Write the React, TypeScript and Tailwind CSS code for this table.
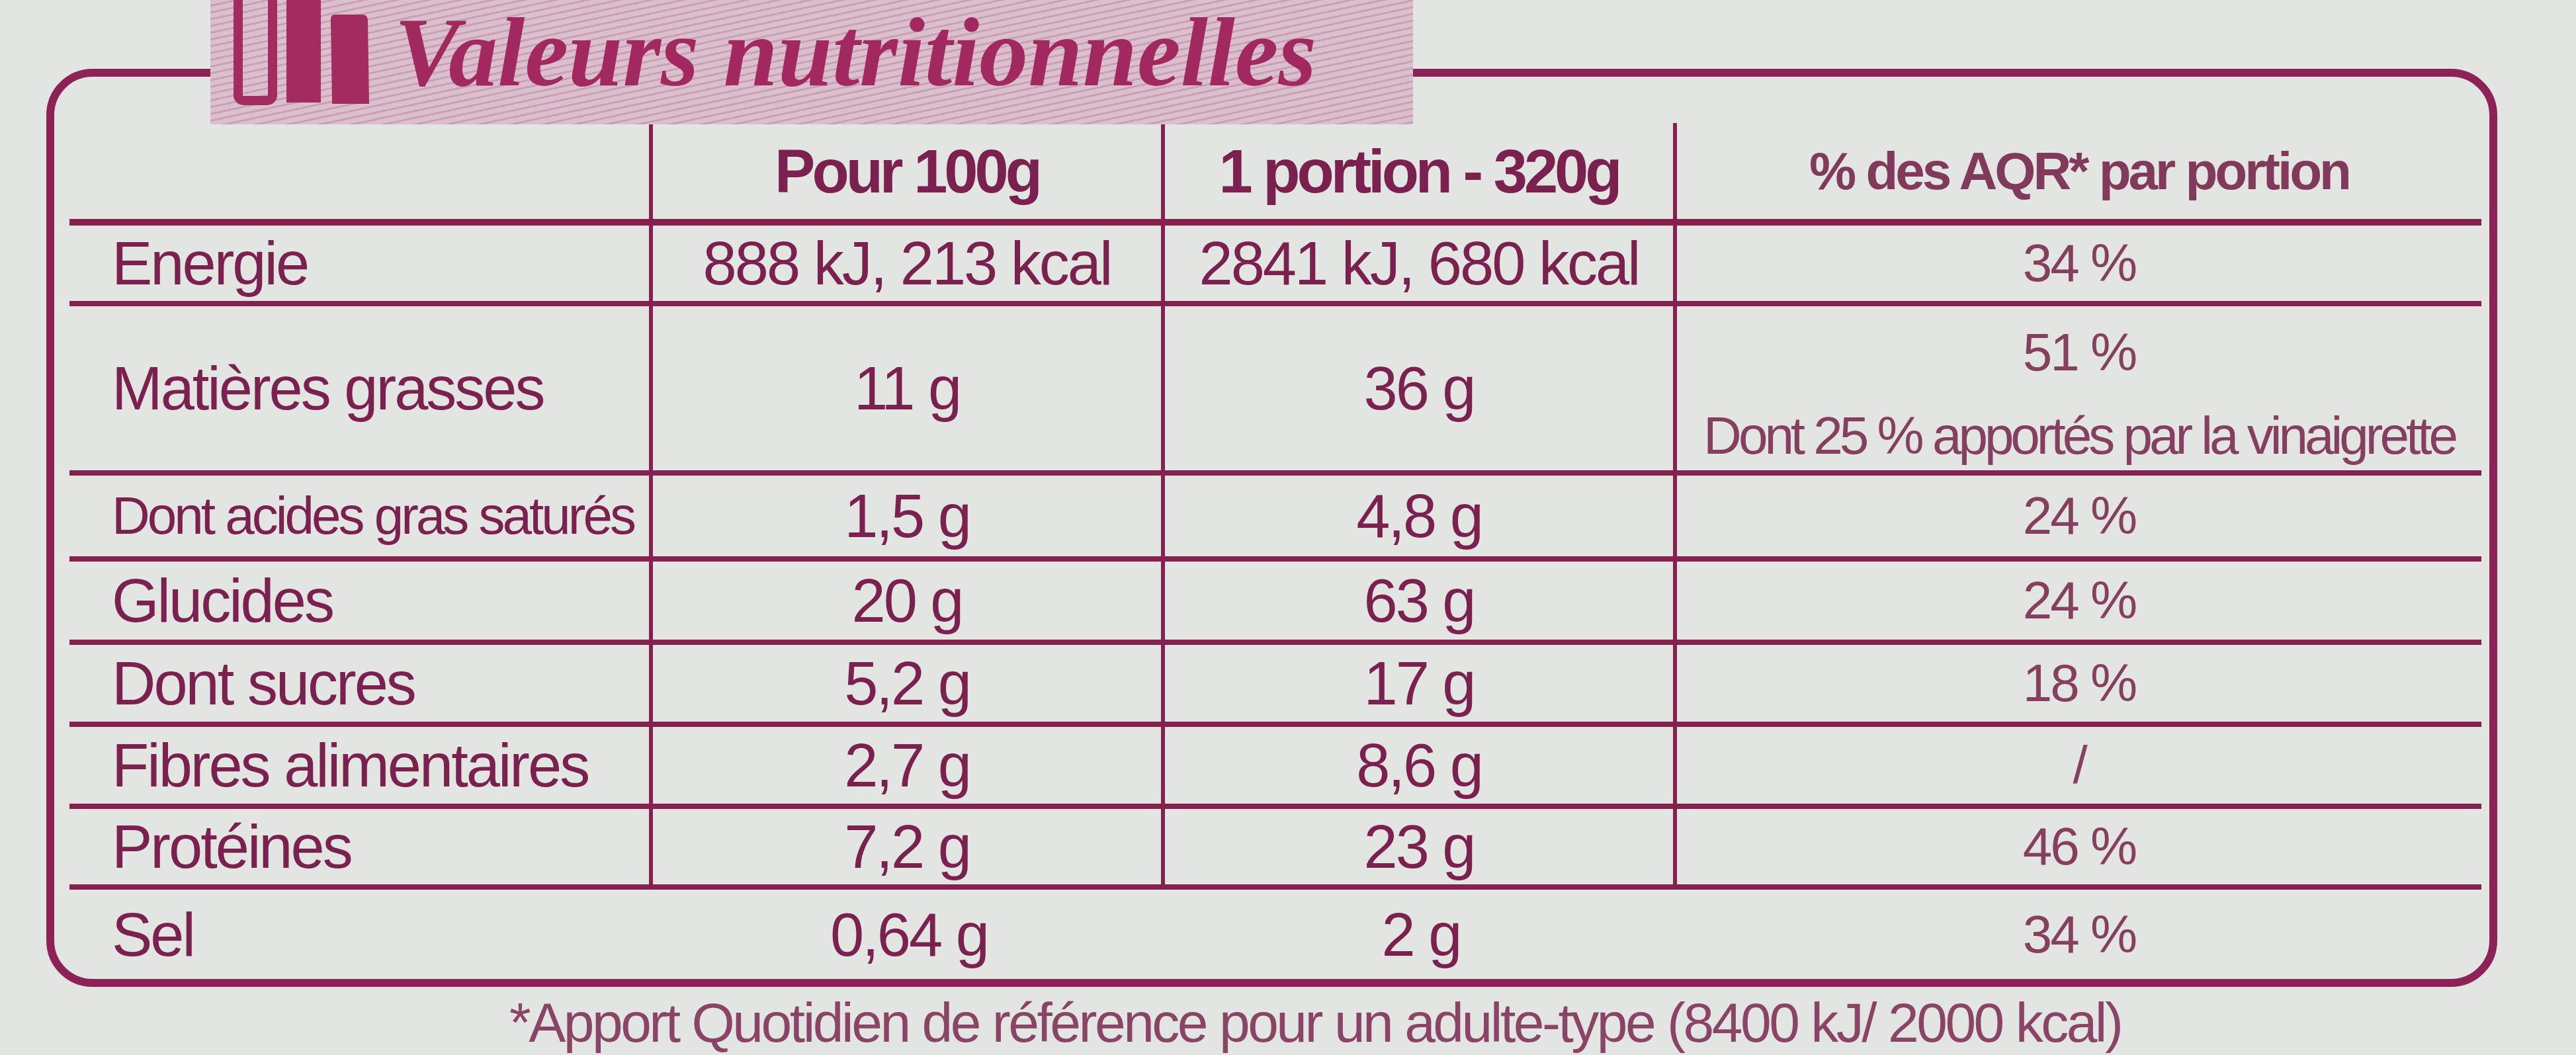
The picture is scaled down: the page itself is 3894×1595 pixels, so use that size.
const LINE = 'border-[#85204f]';

type Row = {
  label: string;
  per100: string;
  portion: string;
  aqr: string[];
  height: string;
  labelClass?: string;
  last?: boolean;
};

const ROWS: Row[] = [
  { label: 'Energie', per100: '888 kJ, 213 kcal', portion: '2841 kJ, 680 kcal', aqr: ['34 %'], height: 'h-[122px]' },
  {
    label: 'Matières grasses',
    per100: '11 g',
    portion: '36 g',
    aqr: ['51 %', 'Dont 25 % apportés par la vinaigrette'],
    height: 'h-[256px]',
  },
  {
    label: 'Dont acides gras saturés',
    per100: '1,5 g',
    portion: '4,8 g',
    aqr: ['24 %'],
    height: 'h-[130px]',
    labelClass: 'text-[80px] tracking-[-4px]',
  },
  { label: 'Glucides', per100: '20 g', portion: '63 g', aqr: ['24 %'], height: 'h-[126px]' },
  { label: 'Dont sucres', per100: '5,2 g', portion: '17 g', aqr: ['18 %'], height: 'h-[124px]' },
  { label: 'Fibres alimentaires', per100: '2,7 g', portion: '8,6 g', aqr: ['/'], height: 'h-[124px]' },
  { label: 'Protéines', per100: '7,2 g', portion: '23 g', aqr: ['46 %'], height: 'h-[122px]' },
  { label: 'Sel', per100: '0,64 g', portion: '2 g', aqr: ['34 %'], height: 'h-[135px]', last: true },
];

function BarsIcon() {
  return (
    <svg width="212" height="160" viewBox="0 0 212 160" className="shrink-0">
      <rect x="12" y="-20" width="52" height="172" rx="8" fill="none" stroke="#a22c5f" strokeWidth="14" />
      <rect x="85" y="-10" width="52" height="165" fill="#a22c5f" />
      <path d="M158 22 L200 22 Q208 22 208 32 L210 157 L154 157 L152 30 Q152 22 158 22 Z" fill="#a22c5f" />
    </svg>
  );
}

function NutritionRow({ row }: { row: Row }) {
  const rowBorder = row.last ? '' : `border-b-[8px] ${LINE}`;
  const cellBorder = row.last ? '' : `border-r-[6px] ${LINE}`;
  return (
    <div className={`grid grid-cols-[882px_774px_774px_1fr] ${row.height} ${rowBorder}`}>
      <div className={`flex items-center pl-[64px] ${cellBorder}`}>
        <span className={row.labelClass ?? 'text-[92px] tracking-[-3px]'}>{row.label}</span>
      </div>
      <div className={`flex items-center justify-center text-[92px] tracking-[-3px] ${cellBorder}`}>{row.per100}</div>
      <div className={`flex items-center justify-center text-[92px] tracking-[-3px] ${cellBorder}`}>{row.portion}</div>
      {row.aqr.length > 1 ? (
        <div className="flex flex-col items-center pt-[30px] gap-[46px] text-[80px] text-[#85405f]">
          <span className="tracking-[-3px]">{row.aqr[0]}</span>
          <span className="tracking-[-5px] whitespace-nowrap">{row.aqr[1]}</span>
        </div>
      ) : (
        <div className="flex items-center justify-center text-[80px] tracking-[-3px] text-[#85405f]">{row.aqr[0]}</div>
      )}
    </div>
  );
}

export default function App() {
  return (
    <div className="relative w-[3894px] h-[1595px] overflow-hidden bg-[#e3e5e2] font-['Liberation_Sans',Arial,sans-serif] text-[#7a2150] leading-none">
      {/* Framed table */}
      <div className="ml-[70px] pt-[104px]">
        <div className="w-[3705px] h-[1388px] rounded-[70px] border-[12px] border-[#8c2256] pl-[23px] pr-[12px] pt-[70px]">
          {/* Header */}
          <div className={`grid grid-cols-[882px_774px_774px_1fr] h-[155px] border-b-[10px] ${LINE} font-bold`}>
            <div className={`border-r-[6px] ${LINE}`} />
            <div className={`flex items-center justify-center text-[92px] tracking-[-5px] border-r-[6px] ${LINE}`}>
              Pour 100g
            </div>
            <div className={`flex items-center justify-center text-[92px] tracking-[-5px] border-r-[6px] ${LINE}`}>
              1 portion - 320g
            </div>
            <div className="flex items-center justify-center text-[80px] tracking-[-4px] text-[#823a5c]">
              % des AQR* par portion
            </div>
          </div>
          {ROWS.map((r) => (
            <NutritionRow key={r.label} row={r} />
          ))}
        </div>
        <div className="mt-[12px] ml-[700px] text-[84px] tracking-[-3.5px] text-[#8a4566] whitespace-nowrap">
          *Apport Quotidien de référence pour un adulte-type (8400 kJ/ 2000 kcal)
        </div>
      </div>

      {/* Title banner over the frame */}
      <div className="absolute left-[318px] top-0 w-[1818px] h-[188px] flex items-start gap-[36px] pl-[30px] bg-[repeating-linear-gradient(168deg,#dbbfcd_0px,#dbbfcd_7px,#c8a1b5_7px,#c8a1b5_10px)]">
        <BarsIcon />
        <span className="pt-[2px] text-[148px] leading-[1.05] italic font-bold text-[#a2295f] font-['Liberation_Serif',serif] whitespace-nowrap">
          Valeurs nutritionnelles
        </span>
      </div>
    </div>
  );
}
